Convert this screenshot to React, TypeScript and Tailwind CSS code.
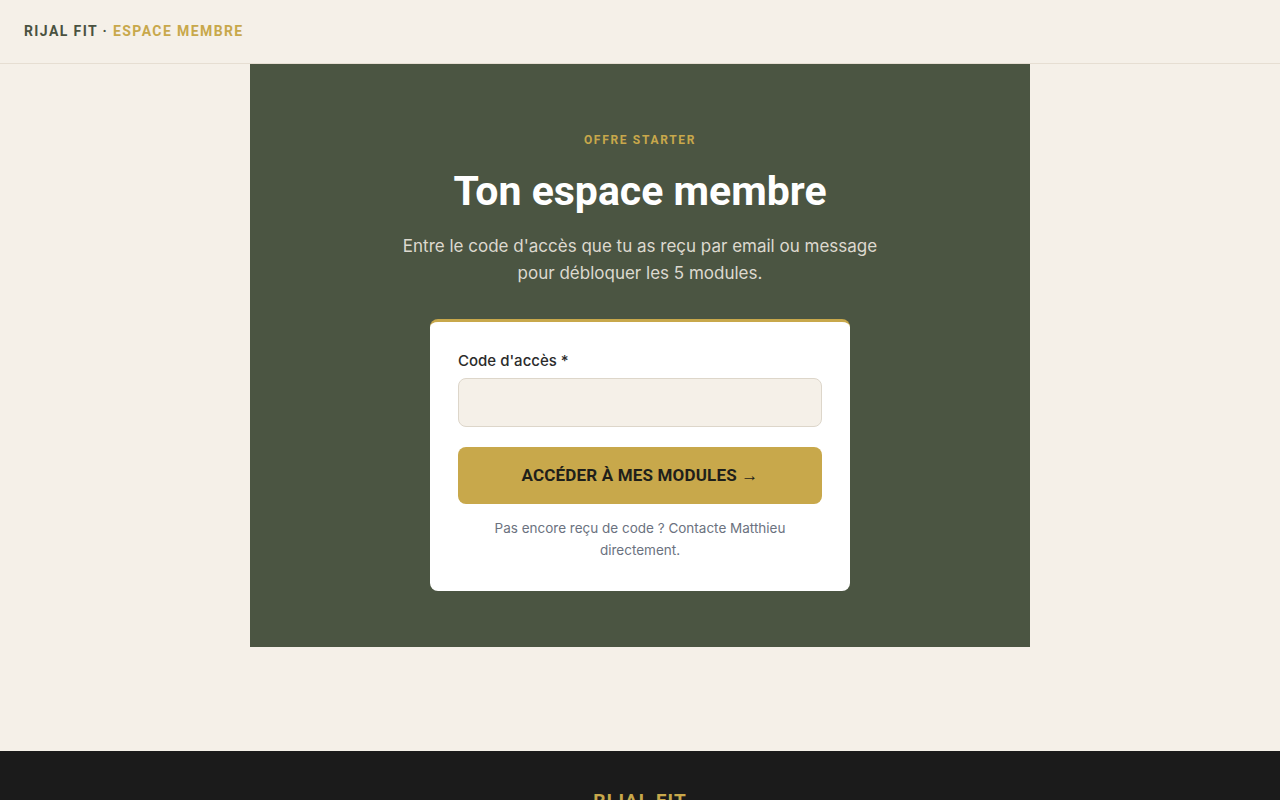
const display = "font-['Roboto',sans-serif]";

export default function App() {
  return (
    <div className="min-h-screen bg-[#f5f0e8] font-['Inter',sans-serif] flex flex-col">
      <header className="h-16 border-b border-[#e6ded2] flex items-center px-6">
        <span className={`${display} font-bold text-[14px] tracking-[0.1em] text-[#4a5240]`}>
          RIJAL FIT · <span className="text-[#c8a84b]">ESPACE MEMBRE</span>
        </span>
      </header>

      <main className="flex justify-center">
        <section className="w-[780px] bg-[#4b5542] pt-[67px] pb-[56px] flex flex-col items-center">
          <p className={`${display} font-bold text-[12px] tracking-[0.14em] text-[#c8a84b]`}>OFFRE STARTER</p>
          <h1 className={`${display} font-bold text-[41px] leading-none text-white mt-[22px]`}>Ton espace membre</h1>
          <p className="mt-[21px] text-[17px] leading-[27px] text-[#ddd9cf] text-center w-[490px]">
            Entre le code d'accès que tu as reçu par email ou message pour débloquer les 5 modules.
          </p>

          <div className="mt-[32px] w-[420px] bg-white rounded-lg border-t-[3px] border-[#c8a84b] px-7 pt-[29px] pb-[30px]">
            <label className="block text-[15px] font-medium text-[#2b2b2b] leading-5">Code d'accès *</label>
            <input
              type="text"
              className="mt-[7px] w-full h-[49px] rounded-lg bg-[#f5f0e8] border border-[#ddd6ca] px-4 outline-none"
            />
            <button className={`mt-5 w-full h-[57px] rounded-lg bg-[#c8a84b] ${display} font-bold text-[17px] tracking-[0.01em] text-[#1f1f1a]`}>
              ACCÉDER À MES MODULES →
            </button>
            <p className="mt-[13px] text-[13.5px] leading-[22px] text-[#6b7280] text-center">
              Pas encore reçu de code ? Contacte Matthieu
              <br />
              directement.
            </p>
          </div>
        </section>
      </main>

      <div className="h-[104px]" />

      <footer className="bg-[#1b1b1b] pt-[36px] pb-10 flex justify-center">
        <span className={`${display} font-bold text-[19px] tracking-[0.06em] text-[#c8a84b]`}>RIJAL FIT</span>
      </footer>
    </div>
  );
}
